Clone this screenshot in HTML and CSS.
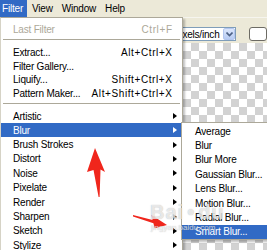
FILE: index.html
```html
<!DOCTYPE html>
<html lang="en">
<head>
    <meta charset="UTF-8">
    <meta name="viewport" content="width=device-width, initial-scale=1.0">
    <title>Filter Menu</title>
    <link rel="stylesheet" href="styles.css">
</head>
<body>
    <div class="app">
        <div class="menubar">
            <span class="menubar-item active">Filter</span>
            <span class="menubar-item">View</span>
            <span class="menubar-item">Window</span>
            <span class="menubar-item">Help</span>
        </div>

        <div class="optionsbar">
            <div class="select">
                <span class="select-text">pixels/inch</span>
                <span class="select-btn">
                    <svg width="7" height="5" viewBox="0 0 7 5"><path d="M0.5 0.5 L3.5 3.5 L6.5 0.5" fill="none" stroke="#4d6185" stroke-width="1.6"/></svg>
                </span>
            </div>
            <div class="opt-btn"></div>
        </div>

        <div class="workspace">
            <div class="doc"></div>
        </div>

        <!-- Filter dropdown -->
        <div class="menu">
            <div class="item disabled h14"><span>Last Filter</span><span class="key">Ctrl+F</span></div>
            <div class="sep"></div>
            <div class="item h14"><span>Extract...</span><span class="key">Alt+Ctrl+X</span></div>
            <div class="item h14"><span>Filter Gallery...</span></div>
            <div class="item h135"><span>Liquify...</span><span class="key">Shift+Ctrl+X</span></div>
            <div class="item h135"><span>Pattern Maker...</span><span class="key">Alt+Shift+Ctrl+X</span></div>
            <div class="sep"></div>
            <div class="item h14"><span>Artistic</span><span class="arrow"></span></div>
            <div class="item sub active"><span>Blur</span><span class="arrow"></span></div>
            <div class="item sub"><span>Brush Strokes</span><span class="arrow"></span></div>
            <div class="item sub"><span>Distort</span><span class="arrow"></span></div>
            <div class="item sub"><span>Noise</span><span class="arrow"></span></div>
            <div class="item sub"><span>Pixelate</span><span class="arrow"></span></div>
            <div class="item sub"><span>Render</span><span class="arrow"></span></div>
            <div class="item sub"><span>Sharpen</span><span class="arrow"></span></div>
            <div class="item sub"><span>Sketch</span><span class="arrow"></span></div>
            <div class="item sub"><span>Stylize</span><span class="arrow"></span></div>
        </div>

        <!-- Blur submenu -->
        <div class="submenu">
            <div class="item sub"><span>Average</span></div>
            <div class="item sub"><span>Blur</span></div>
            <div class="item sub"><span>Blur More</span></div>
            <div class="item sub"><span>Gaussian Blur...</span></div>
            <div class="item sub"><span>Lens Blur...</span></div>
            <div class="item sub"><span>Motion Blur...</span></div>
            <div class="item sub"><span>Radial Blur...</span></div>
            <div class="item sub active"><span>Smart Blur...</span></div>
        </div>

        <!-- annotation arrows -->
        <svg class="annot" width="267" height="250" viewBox="0 0 267 250">
            <polygon points="95,148 105,172 100.5,169.5 99.6,197 98.6,197 93.5,170 87,172" fill="#f0261c"/>
            <polygon points="133,215 152.6,220 151.2,214.7 167,225 154.8,228.3 153.4,223.2 133,216.6" fill="#f0261c"/>
        </svg>

        <div class="watermark">
            <span class="wm-logo">Bai<span class="wm-paw">&#8226;</span>du</span>
            <span class="wm-url">jingyan.baidu.com</span>
        </div>
    </div>
</body>
</html>
```

FILE: styles.css
```css
* {
    margin: 0;
    padding: 0;
    box-sizing: border-box;
}

body {
    font-family: "Liberation Sans", Arial, sans-serif;
    font-size: 10px;
    letter-spacing: -0.2px;
    color: #000;
    background: #ece9d8;
}

.app {
    position: relative;
    width: 267px;
    height: 250px;
    overflow: hidden;
    display: flex;
    flex-direction: column;
    background: #ece9d8;
}

/* top menu bar */
.menubar {
    display: flex;
    height: 17px;
    align-items: stretch;
    gap: 3px;
}

.menubar-item {
    display: flex;
    align-items: center;
    padding: 0 4px 0 2px;
}

.menubar-item.active {
    background: #316ac5;
    color: #fff;
}

/* tool options bar */
.optionsbar {
    height: 26px;
    display: flex;
    align-items: flex-start;
    padding: 9px 0 0 171px;
    gap: 13px;
    border-top: 1px solid #f6f5ef;
}

.select {
    width: 73px;
    height: 14px;
    background: #fff;
    border: 1px solid #7f9db9;
    display: flex;
    align-items: center;
    justify-content: space-between;
}

.select-text {
    padding-left: 3px;
}

.select-btn {
    width: 12px;
    height: 12px;
    background: linear-gradient(#dbe6fb, #b7cbf3);
    border: 1px solid #b3c6ef;
    border-radius: 2px;
    display: flex;
    align-items: center;
    justify-content: center;
}

.opt-btn {
    width: 20px;
    height: 14px;
    background: #fff;
    border: 1px solid #6d6b64;
    border-radius: 3px;
}

/* document canvas */
.workspace {
    flex: 1;
    padding-left: 181px;
}

.doc {
    height: 100%;
    border-left: 2px solid #9d9d9d;
    background-color: #fff;
    background-image: repeating-conic-gradient(#d2d2d2 0 25%, #fff 0 50%);
    background-size: 16px 16px;
    background-position: 0 0;
}

/* dropdown menus */
.menu,
.submenu {
    position: absolute;
    background: #fff;
    border: 1px solid #aca899;
    box-shadow: 2px 2px 2px rgba(0, 0, 0, 0.25);
}

.menu {
    left: 0;
    top: 17px;
    width: 183px;
    padding-top: 4px;
    border-left-color: #d6d3c6;
}

.submenu {
    left: 181px;
    top: 122px;
    width: 95px;
    padding: 1px 0 0;
}

.item {
    display: flex;
    align-items: center;
    padding: 0 10px 0 12px;
    white-space: nowrap;
}

.submenu .item {
    padding-left: 13px;
}

.h14 {
    height: 14px;
}

.h135 {
    height: 13.5px;
}

.sub {
    height: 14.4px;
}

.item.active {
    background: #316ac5;
    color: #fff;
}

.item.disabled {
    color: #aca899;
    text-shadow: 1px 1px 0 #fff;
}

.key {
    margin-left: auto;
    margin-right: -0.6px;
    letter-spacing: 0.6px;
}

.arrow {
    margin-left: auto;
    margin-right: -5px;
    width: 0;
    height: 0;
    border-top: 3.5px solid transparent;
    border-bottom: 3.5px solid transparent;
    border-left: 4px solid #000;
}

.item.active .arrow {
    border-left-color: #fff;
}

.sep {
    height: 9px;
    margin: 0 2px;
    display: flex;
    align-items: center;
}

.sep::before {
    content: "";
    flex: 1;
    height: 2px;
    border-top: 1px solid #aca899;
    border-bottom: 1px solid #fff;
}

/* overlays */
.annot {
    position: absolute;
    left: 0;
    top: 0;
    pointer-events: none;
}

.watermark {
    position: absolute;
    left: 150px;
    top: 201px;
    display: flex;
    flex-direction: column;
    color: rgba(255, 255, 255, 0.7);
    text-shadow: 0 0 1px rgba(110, 110, 110, 0.55);
    letter-spacing: 0;
    pointer-events: none;
}

.wm-logo {
    font-size: 20px;
    font-weight: bold;
    line-height: 22px;
    letter-spacing: 1px;
}

.wm-paw {
    padding: 0 3px;
}

.wm-url {
    font-size: 8px;
    line-height: 9px;
    padding-left: 1px;
}
```
